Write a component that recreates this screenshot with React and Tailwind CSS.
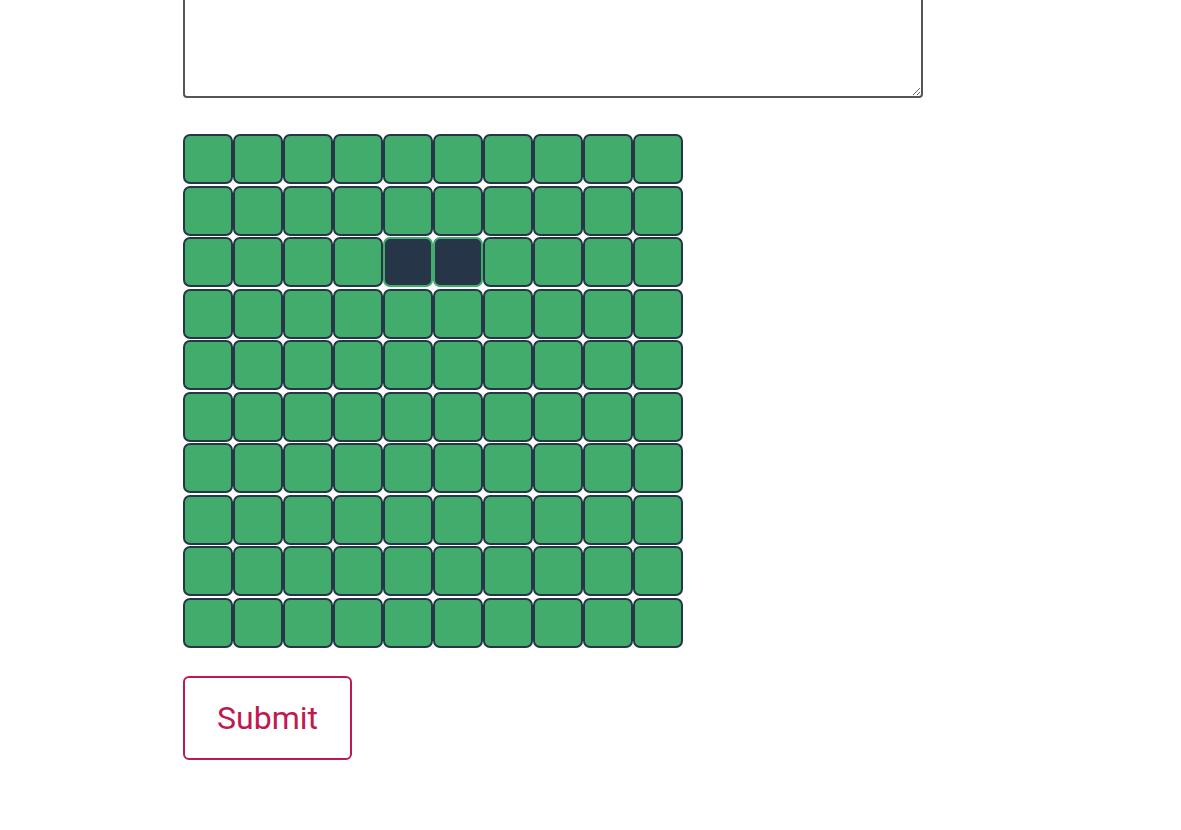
import { useState } from 'react'

const ROWS = 10
const COLS = 10

const App = () => {
  const [active, setActive] = useState(['2-4', '2-5'])

  const toggle = (key) => {
    setActive((prev) => (prev.includes(key) ? prev.filter((k) => k !== key) : [...prev, key]))
  }

  return (
    <div className="min-h-screen bg-white font-['Roboto',sans-serif]">
      <div className="pl-[183px] overflow-hidden h-[830px]">
        <textarea
          className="block w-[740px] h-[140px] -mt-[42px] rounded-[4px] border-2 border-[#555555] bg-white"
        />

        <div className="mt-[36px] flex flex-col gap-y-[1.5px]">
          {Array.from({ length: ROWS }).map((_, r) => (
            <div key={r} className="flex">
              {Array.from({ length: COLS }).map((_, c) => {
                const key = `${r}-${c}`
                const on = active.includes(key)
                return (
                  <button
                    key={key}
                    onClick={() => toggle(key)}
                    className={`w-[50px] h-[50px] rounded-[7px] border-2 ${
                      on ? 'bg-[#273549] border-[#41ac6c]' : 'bg-[#41ac6c] border-[#273549]'
                    }`}
                  />
                )
              })}
            </div>
          ))}
        </div>

        <button className="mt-[28px] w-[169px] h-[84px] rounded-[6px] border-2 border-[#be1a50] text-[#be1a50] text-[32px] bg-white">
          Submit
        </button>
      </div>
    </div>
  )
}

export default App
